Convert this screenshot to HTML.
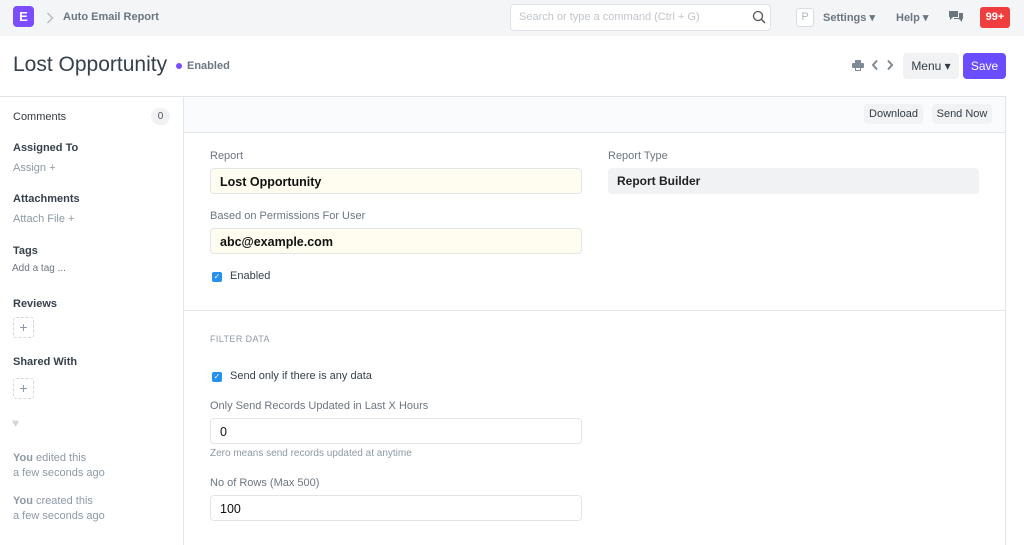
<!DOCTYPE html>
<html><head><meta charset="utf-8"><style>
*{box-sizing:border-box;margin:0;padding:0}
body{width:1024px;height:545px;overflow:hidden;font-family:"Liberation Sans",sans-serif;background:#fff;color:#1f272e;position:relative}
.abs{position:absolute}
.nav{left:0;top:0;width:1024px;height:36px;background:#f4f5f7}
.lbl{font-size:11px;color:#6c7680}
.inp{height:26px;border-radius:4px;background:#fffdf0;border:1px solid #e2e5e8;font-size:12.5px;font-weight:bold;padding:6px 9px;color:#111}
.side{font-size:11px;color:#333c44}
.sub{font-size:11px;color:#8d99a6}
.cb{width:10px;height:10px;background:#2490ef;border-radius:2px;color:#fff;font-size:8px;line-height:10px;text-align:center}
.dash{width:21px;height:21px;border:1px dashed #d1d8dd;border-radius:3px;color:#8d99a6;font-size:14px;text-align:center;line-height:18px}
.btn{background:#f0f2f4;border-radius:4px;font-size:11px;color:#333c44;text-align:center}
</style></head><body>
<div class="abs nav"></div>
<div class="abs" style="left:13px;top:6px;width:21px;height:21px;background:#7c4dff;border-radius:4px;color:#fff;font-weight:bold;font-size:13px;text-align:center;line-height:21px">E</div>
<svg class="abs" style="left:46px;top:12px" width="8" height="12"><path d="M1.5 1l5 5-5 5" fill="none" stroke="#b0b8c0" stroke-width="1.3"/></svg>
<div class="abs" style="left:63px;top:11px;font-size:11px;font-weight:bold;color:#6c7680">Auto Email Report</div>
<div class="abs" style="left:510px;top:4px;width:261px;height:27px;background:#fff;border:1px solid #dfe3e8;border-radius:4px"></div>
<div class="abs" style="left:519px;top:11px;font-size:11px;color:#c0c6cc">Search or type a command (Ctrl + G)</div>
<svg class="abs" style="left:752px;top:10px" width="14" height="14"><circle cx="6" cy="6" r="4.5" fill="none" stroke="#555" stroke-width="1.3"/><path d="M9.5 9.5L13 13" stroke="#555" stroke-width="1.4"/></svg>
<div class="abs" style="left:796px;top:8px;width:18px;height:19px;border:1px solid #d8dde2;border-radius:3px;font-size:11px;color:#b0b8c0;text-align:center;line-height:17px;background:#fff">P</div>
<div class="abs" style="left:823px;top:11px;font-size:11px;font-weight:bold;color:#6c7680">Settings ▾</div>
<div class="abs" style="left:896px;top:11px;font-size:11px;font-weight:bold;color:#6c7680">Help ▾</div>
<svg class="abs" style="left:948px;top:10px" width="16" height="13"><path d="M1 1h9v6H5l-3 3V7H1z" fill="#6c7680"/><path d="M11 3h4v6h-1v3l-3-3H6V8h5z" fill="#6c7680"/></svg>
<div class="abs" style="left:980px;top:7px;width:30px;height:21px;background:#f03e3e;border-radius:3px;color:#fff;font-size:11px;font-weight:bold;text-align:center;line-height:21px">99+</div>

<div class="abs" style="left:13px;top:53px;font-size:21px;color:#36414c">Lost Opportunity</div>
<div class="abs" style="left:176px;top:63px;width:6px;height:6px;border-radius:50%;background:#7c4dff"></div>
<div class="abs" style="left:187px;top:60px;font-size:11px;font-weight:bold;color:#6c7680">Enabled</div>
<svg class="abs" style="left:852px;top:60px" width="12" height="11"><rect x="3" y="0" width="6" height="3" fill="#7e8a96"/><rect x="0" y="3" width="12" height="5" rx="1" fill="#7e8a96"/><rect x="3.5" y="7.5" width="5" height="3" fill="#fff" stroke="#7e8a96"/></svg>
<svg class="abs" style="left:871px;top:59px" width="8" height="12"><path d="M6 1.5L2 6l4 4.5" fill="none" stroke="#7e8a96" stroke-width="2"/></svg>
<svg class="abs" style="left:886px;top:59px" width="8" height="12"><path d="M2 1.5L6 6l-4 4.5" fill="none" stroke="#7e8a96" stroke-width="2"/></svg>
<div class="abs btn" style="left:903px;top:53px;width:56px;height:26px;line-height:26px;font-size:12px">Menu ▾</div>
<div class="abs" style="left:963px;top:53px;width:43px;height:26px;border-radius:4px;color:#fff;font-size:12px;text-align:center;line-height:26px;background:#6a4dff">Save</div>

<div class="abs" style="left:0;top:96px;width:1006px;height:1px;background:#e2e5e8"></div>
<div class="abs" style="left:183px;top:96px;width:1px;height:449px;background:#e2e5e8"></div>
<div class="abs" style="left:1005px;top:96px;width:1px;height:449px;background:#e2e5e8"></div>
<div class="abs" style="left:184px;top:97px;width:821px;height:35px;background:#fafbfc"></div>
<div class="abs" style="left:184px;top:132px;width:821px;height:1px;background:#e2e5e8"></div>
<div class="abs btn" style="left:864px;top:104px;width:59px;height:20px;line-height:20px">Download</div>
<div class="abs btn" style="left:932px;top:104px;width:60px;height:20px;line-height:20px">Send Now</div>

<div class="abs side" style="left:13px;top:111px">Comments</div>
<div class="abs" style="left:151px;top:108px;width:19px;height:17px;border-radius:9px;background:#f0f2f4;font-size:10px;text-align:center;line-height:17px;color:#555">0</div>
<div class="abs side" style="left:13px;top:142px;font-weight:bold;color:#36414c">Assigned To</div>
<div class="abs sub" style="left:13px;top:162px">Assign +</div>
<div class="abs side" style="left:13px;top:193px;font-weight:bold;color:#36414c">Attachments</div>
<div class="abs sub" style="left:13px;top:213px">Attach File +</div>
<div class="abs side" style="left:13px;top:245px;font-weight:bold;color:#36414c">Tags</div>
<div class="abs" style="left:12px;top:263px;font-size:10px;color:#6c7680">Add a tag ...</div>
<div class="abs side" style="left:13px;top:298px;font-weight:bold;color:#36414c">Reviews</div>
<div class="abs dash" style="left:13px;top:317px">+</div>
<div class="abs side" style="left:13px;top:356px;font-weight:bold;color:#36414c">Shared With</div>
<div class="abs dash" style="left:13px;top:378px">+</div>
<div class="abs" style="left:12px;top:416px;font-size:12px;color:#d1d8dd">♥</div>
<div class="abs sub" style="left:13px;top:451px;line-height:15px"><b>You</b> edited this<br>a few seconds ago</div>
<div class="abs sub" style="left:13px;top:494px;line-height:15px"><b>You</b> created this<br>a few seconds ago</div>

<div class="abs lbl" style="left:210px;top:150px">Report</div>
<div class="abs inp" style="left:210px;top:168px;width:372px">Lost Opportunity</div>
<div class="abs lbl" style="left:210px;top:210px">Based on Permissions For User</div>
<div class="abs inp" style="left:210px;top:228px;width:372px">abc@example.com</div>
<div class="abs cb" style="left:212px;top:272px">✓</div>
<div class="abs lbl" style="left:230px;top:270px;color:#36414c">Enabled</div>
<div class="abs lbl" style="left:608px;top:150px">Report Type</div>
<div class="abs" style="left:608px;top:168px;width:371px;height:26px;background:#f0f2f4;border-radius:4px;font-size:12px;font-weight:bold;padding:6px 9px;color:#222">Report Builder</div>

<div class="abs" style="left:184px;top:310px;width:821px;height:1px;background:#e2e5e8"></div>
<div class="abs" style="left:210px;top:334px;font-size:9px;color:#8d99a6;letter-spacing:.4px">FILTER DATA</div>
<div class="abs cb" style="left:212px;top:372px">✓</div>
<div class="abs lbl" style="left:230px;top:370px;color:#36414c">Send only if there is any data</div>
<div class="abs lbl" style="left:210px;top:400px">Only Send Records Updated in Last X Hours</div>
<div class="abs inp" style="left:210px;top:418px;width:372px;background:#fff;font-weight:normal">0</div>
<div class="abs" style="left:210px;top:448px;font-size:10px;color:#8d99a6">Zero means send records updated at anytime</div>
<div class="abs lbl" style="left:210px;top:477px">No of Rows (Max 500)</div>
<div class="abs inp" style="left:210px;top:495px;width:372px;background:#fff;font-weight:normal">100</div>
</body></html>
